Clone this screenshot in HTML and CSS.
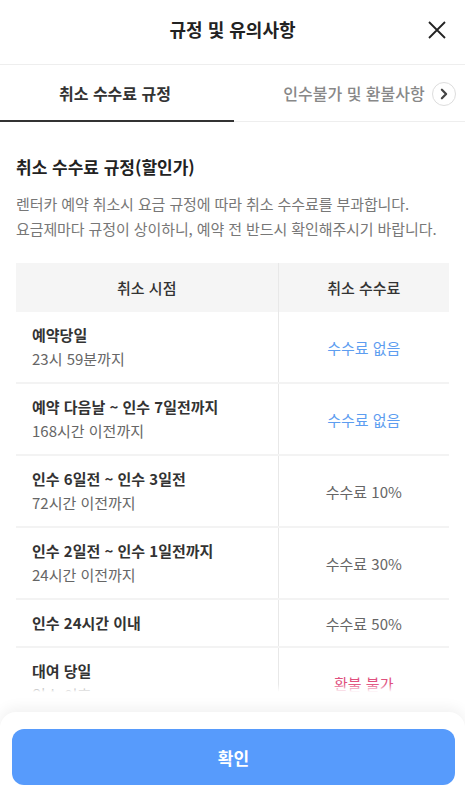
FILE: index.html
```html
<!DOCTYPE html>
<html lang="ko">
<head>
    <meta charset="UTF-8">
    <meta name="viewport" content="width=device-width, initial-scale=1.0">
    <title>규정 및 유의사항</title>
    <link rel="stylesheet" href="styles.css">
</head>
<body>
<div class="sheet">
    <div class="header">
        <h1 class="header-title">규정 및 유의사항</h1>
        <button class="close">
            <svg viewBox="0 0 20 20">
                <path d="M2 2 L18 18 M18 2 L2 18"/>
            </svg>
        </button>
    </div>

    <div class="tabs">
        <div class="tab-list">
            <div class="tab active">취소 수수료 규정</div>
            <div class="tab">인수불가 및 환불사항</div>
        </div>
        <span class="tab-more">
            <svg viewBox="0 0 10 10">
                <polyline points="3.5 2, 6.5 5, 3.5 8"/>
            </svg>
        </span>
    </div>

    <div class="content">
        <h2 class="section-title">취소 수수료 규정(할인가)</h2>
        <p class="desc">렌터카 예약 취소시 요금 규정에 따라 취소 수수료를 부과합니다.<br>요금제마다 규정이 상이하니, 예약 전 반드시 확인해주시기 바랍니다.</p>

        <table class="fee-table">
            <thead>
                <tr>
                    <th class="col-time">취소 시점</th>
                    <th>취소 수수료</th>
                </tr>
            </thead>
            <tbody>
                <tr>
                    <td class="time"><strong>예약당일</strong><span>23시 59분까지</span></td>
                    <td class="fee free">수수료 없음</td>
                </tr>
                <tr>
                    <td class="time"><strong>예약 다음날 ~ 인수 7일전까지</strong><span>168시간 이전까지</span></td>
                    <td class="fee free">수수료 없음</td>
                </tr>
                <tr>
                    <td class="time"><strong>인수 6일전 ~ 인수 3일전</strong><span>72시간 이전까지</span></td>
                    <td class="fee">수수료 10%</td>
                </tr>
                <tr>
                    <td class="time"><strong>인수 2일전 ~ 인수 1일전까지</strong><span>24시간 이전까지</span></td>
                    <td class="fee">수수료 30%</td>
                </tr>
                <tr>
                    <td class="time"><strong>인수 24시간 이내</strong></td>
                    <td class="fee">수수료 50%</td>
                </tr>
                <tr>
                    <td class="time"><strong>대여 당일</strong><span>인수 이후</span></td>
                    <td class="fee no-refund">환불 불가</td>
                </tr>
            </tbody>
        </table>
    </div>

    <div class="footer">
        <button class="confirm">확인</button>
    </div>
</div>
</body>
</html>
```

FILE: styles.css
```css
* {
    box-sizing: border-box;
}

body {
    margin: 0;
    background-color: #fff;
    font-family: "Noto Sans CJK KR", "Noto Sans", sans-serif;
    color: #222;
}

.sheet {
    height: 794px;
    display: flex;
    flex-direction: column;
    overflow: hidden;
}

/* 상단 헤더 */
.header {
    height: 65px;
    flex-shrink: 0;
    position: relative;
    display: flex;
    justify-content: center;
    align-items: center;
    padding-bottom: 6px;
    border-bottom: 1px solid #eee;
}
.header-title {
    margin: 0;
    font-size: 18px;
    font-weight: 700;
    line-height: 24px;
    color: #222;
}
.close {
    position: absolute;
    right: 18px;
    top: 20px;
    width: 20px;
    height: 20px;
    padding: 0;
    border: none;
    background: none;
}
.close svg {
    width: 20px;
    height: 20px;
    display: block;
}
.close svg path {
    stroke: #222;
    stroke-width: 1.8px;
    fill: none;
}

/* 탭 */
.tabs {
    height: 57px;
    flex-shrink: 0;
    position: relative;
    border-bottom: 1px solid #eee;
}
.tab-list {
    display: flex;
    height: 100%;
}
.tab {
    width: 234px;
    flex-shrink: 0;
    display: flex;
    justify-content: center;
    align-items: center;
    padding-left: 6px;
    font-size: 16px;
    font-weight: 500;
    color: #888;
}
.tab.active {
    padding-left: 0;
    padding-right: 4px;
    font-weight: 700;
    color: #333;
    border-bottom: 2px solid #333;
    margin-bottom: -1px;
}
.tab-more {
    position: absolute;
    right: 9px;
    top: 17px;
    width: 24px;
    height: 24px;
    border-radius: 50%;
    border: 1px solid #ddd;
    background-color: #fff;
    display: flex;
    justify-content: center;
    align-items: center;
}
.tab-more svg {
    width: 14px;
    height: 14px;
}
.tab-more svg polyline {
    fill: none;
    stroke: #444;
    stroke-width: 1.6px;
    stroke-linecap: round;
    stroke-linejoin: round;
}

/* 본문 */
.content {
    flex: 1;
    position: relative;
    overflow: hidden;
    padding: 33px 16px 0;
    margin-bottom: 20px;
}
.content::after {
    content: "";
    position: absolute;
    left: 0;
    right: 0;
    bottom: 0;
    height: 8px;
    background: linear-gradient(rgba(255, 255, 255, 0), #fff);
}
.section-title {
    margin: 0;
    font-size: 17px;
    font-weight: 700;
    line-height: 24px;
    color: #222;
}
.desc {
    margin: 12px 0 22px;
    font-size: 15px;
    line-height: 25px;
    color: #777;
    letter-spacing: -0.1px;
}

.fee-table {
    width: 100%;
    border-collapse: collapse;
    font-size: 15px;
}
.fee-table th {
    height: 49px;
    background-color: #f5f5f5;
    font-weight: 500;
    color: #333;
    text-align: center;
}
.fee-table .col-time {
    width: 262px;
    border-right: 1px solid #e8e8e8;
}
.fee-table td {
    border-top: 2px solid #f3f3f3;
    vertical-align: middle;
}
.fee-table tbody tr:first-child td {
    border-top: none;
}
.time {
    padding: 11px 16px;
    border-right: 1px solid #e8e8e8;
}
.time strong {
    display: block;
    font-weight: 700;
    line-height: 24px;
    color: #333;
}
.time span {
    display: block;
    line-height: 24px;
    color: #666;
}
.fee {
    text-align: center;
    color: #666;
}
.fee.free {
    color: #5d9df0;
}
.fee.no-refund {
    color: #e0507e;
}

/* 하단 버튼 */
.footer {
    flex-shrink: 0;
    padding: 17px 10px 9px 12px;
    border-radius: 16px 16px 0 0;
    box-shadow: 0 -4px 14px rgba(0, 0, 0, 0.06);
    background-color: #fff;
}
.confirm {
    width: 100%;
    height: 56px;
    border: none;
    border-radius: 12px;
    background-color: #579bfc;
    color: #fff;
    font-family: inherit;
    font-size: 17px;
    font-weight: 700;
}
```
